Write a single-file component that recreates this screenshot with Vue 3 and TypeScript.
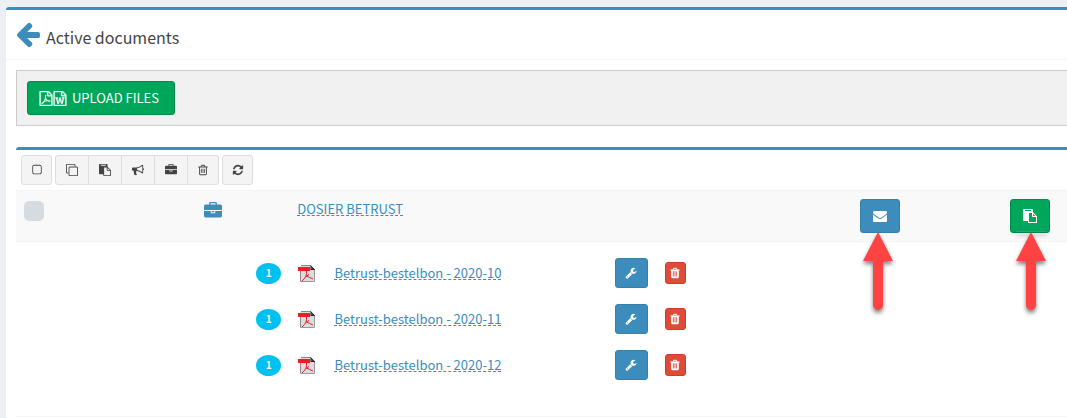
<script setup lang="ts">
interface Doc {
  id: number
  name: string
  pages: number
}

const docs: Doc[] = [
  { id: 1, name: 'Betrust-bestelbon - 2020-10', pages: 1 },
  { id: 2, name: 'Betrust-bestelbon - 2020-11', pages: 1 },
  { id: 3, name: 'Betrust-bestelbon - 2020-12', pages: 1 },
]

const sheet =
  'M1596 380q28 28 48 76t20 88v1152q0 40-28 68t-68 28h-1344q-40 0-68-28t-28-68v-1600q0-40 28-68t68-28h896q40 0 88 20t76 48zm-444-244v376h376q-10-29-22-41l-313-313q-12-12-41-22zm384 1528v-1024h-416q-40 0-68-28t-28-68v-416h-768v1536h1280z'
const trashLid =
  'M672 384h448l-48-117q-7-9-17-11h-317q-10 2-17 11zm928 32v64q0 14-9 23t-23 9h-96v948q0 83-47 143.5t-113 60.5h-832q-66 0-113-58.5t-47-141.5v-952h-96q-14 0-23-9t-9-23v-64q0-14 9-23t23-9h309l70-167q15-37 54-63t79-26h320q40 0 79 26t54 63l70 167h309q14 0 23 9t9 23z'

const icons = {
  back: 'M1664 896v128q0 53-32.5 90.5t-84.5 37.5h-704l293 294q38 36 38 90t-38 90l-75 76q-37 37-90 37-52 0-91-37l-651-652q-37-37-37-90 0-52 37-91l651-650q38-38 91-38 52 0 90 38l75 74q38 38 38 91t-38 91l-293 293h704q52 0 84.5 37.5t32.5 90.5z',
  pdf:
    sheet +
    'm-514-593q33 26 84 56 59-7 117-7 147 0 177 49 16 22 2 52 0 1-1 2l-2 2v1q-6 38-71 38-48 0-115-20t-130-53q-221 24-392 83-153 262-242 262-15 0-28-7l-24-12q-1-1-6-5-10-10-6-36 9-40 56-91.5t132-96.5q14-9 23 6 2 2 2 4 52-85 107-197 68-136 104-262-24-82-30.5-159.5t6.5-127.5q11-40 42-40h22q23 0 35 15 18 21 9 68-2 6-4 8 1 3 1 8v30q-2 123-14 192 55 164 146 238zm-576 411q52-24 137-158-51 40-87.5 84t-49.5 74zm398-920q-15 42-2 132 1-7 7-44 0-3 7-43 1-4 4-8-1-1-1-2-1-2-1-3-1-22-13-36 0 1-1 2v2zm-124 661q135-54 284-81-2-1-13-9.5t-16-13.5q-76-67-127-176-27 86-83 197-30 56-45 83zm646-16q-24-24-140-24 76 28 124 28 14 0 18-1 0-1-2-3z',
  word:
    sheet +
    'M361 768v107h70l164 661h159l128-485q7-20 10-46 2-16 2-24h4l3 24q1 3 3.5 20t5.5 26l128 485h159l164-661h70v-107h-300v107h90l-99 438q-5 20-7 46l-2 21h-4q0-3-.5-6.5t-1.5-8-1-6.5q-1-5-4-21t-5-25l-144-545h-114l-144 545q-2 9-4.5 24.5t-3.5 21.5l-4 21h-4l-2-21q-2-26-7-46l-99-438h90v-107z',
  square: 'M1312 256h-832q-66 0-113 47t-47 113v832q0 66 47 113t113 47h832q66 0 113-47t47-113v-832q0-66-47-113t-113-47zm288 160v832q0 119-84.5 203.5t-203.5 84.5h-832q-119 0-203.5-84.5t-84.5-203.5v-832q0-119 84.5-203.5t203.5-84.5h832q119 0 203.5 84.5t84.5 203.5z',
  clone: 'M1664 1632v-1088q0-13-9.5-22.5t-22.5-9.5h-1088q-13 0-22.5 9.5t-9.5 22.5v1088q0 13 9.5 22.5t22.5 9.5h1088q13 0 22.5-9.5t9.5-22.5zm128-1088v1088q0 66-47 113t-113 47h-1088q-66 0-113-47t-47-113v-1088q0-66 47-113t113-47h1088q66 0 113 47t47 113zm-384-384v160h-128v-160q0-13-9.5-22.5t-22.5-9.5h-1088q-13 0-22.5 9.5t-9.5 22.5v1088q0 13 9.5 22.5t22.5 9.5h160v128h-160q-66 0-113-47t-47-113v-1088q0-66 47-113t113-47h1088q66 0 113 47t47 113z',
  paste: 'M768 1664h896v-640h-416q-40 0-68-28t-28-68v-416h-384v1152zm256-1440v-64q0-13-9.5-22.5t-22.5-9.5h-704q-13 0-22.5 9.5t-9.5 22.5v64q0 13 9.5 22.5t22.5 9.5h704q13 0 22.5-9.5t9.5-22.5zm256 672h299l-299-299v299zm512 128v672q0 40-28 68t-68 28h-960q-40 0-68-28t-28-68v-160h-544q-40 0-68-28t-28-68v-1344q0-40 28-68t68-28h1088q40 0 68 28t28 68v328q21 13 36 28l408 408q28 28 48 76t20 88z',
  bullhorn: 'M1664 640q53 0 90.5 37.5t37.5 90.5-37.5 90.5-90.5 37.5v384q0 52-38 90t-90 38q-417-347-812-380-58 19-91 66t-31 100.5 40 92.5q-20 33-23 65.5t6 58 33.5 55 48 50 61.5 50.5q-29 58-111.5 83t-168.5 11.5-132-55.5q-7-23-29.5-87.5t-32-94.5-23-89-15-101 3.5-98.5 22-110.5h-122q-66 0-113-47t-47-113v-192q0-66 47-113t113-47h480q435 0 896-384 52 0 90 38t38 90v384zm-128 604v-954q-394 302-768 343v270q377 42 768 341z',
  briefcase: 'M640 256h512v-128h-512v128zm1152 640v480q0 66-47 113t-113 47h-1472q-66 0-113-47t-47-113v-480h672v160q0 26 19 45t45 19h320q26 0 45-19t19-45v-160h672zm-768 0v128h-256v-128h256zm768-480v384h-1792v-384q0-66 47-113t113-47h352v-160q0-40 28-68t68-28h576q40 0 68 28t28 68v160h352q66 0 113 47t47 113z',
  trashOutline:
    trashLid +
    'M704 736v576q0 14-9 23t-23 9h-64q-14 0-23-9t-9-23v-576q0-14 9-23t23-9h64q14 0 23 9t9 23zm256 0v576q0 14-9 23t-23 9h-64q-14 0-23-9t-9-23v-576q0-14 9-23t23-9h64q14 0 23 9t9 23zm256 0v576q0 14-9 23t-23 9h-64q-14 0-23-9t-9-23v-576q0-14 9-23t23-9h64q14 0 23 9t9 23zm128 724v-948h-896v948q0 22 7 40.5t14.5 27 10.5 8.5h832q3 0 10.5-8.5t14.5-27 7-40.5z',
  trash:
    trashLid +
    'M704 1376v-704q0-14-9-23t-23-9h-64q-14 0-23 9t-9 23v704q0 14 9 23t23 9h64q14 0 23-9t9-23zm256 0v-704q0-14-9-23t-23-9h-64q-14 0-23 9t-9 23v704q0 14 9 23t23 9h64q14 0 23-9t9-23zm256 0v-704q0-14-9-23t-23-9h-64q-14 0-23 9t-9 23v704q0 14 9 23t23 9h64q14 0 23-9t9-23z',
  refresh: 'M1639 1056q0 5-1 7-64 268-268 434.5t-478 166.5q-146 0-282.5-55t-243.5-157l-129 129q-19 19-45 19t-45-19-19-45v-448q0-26 19-45t45-19h448q26 0 45 19t19 45-19 45l-137 137q71 66 161 102t187 36q134 0 250-65t186-179q11-17 53-117 8-23 30-23h192q13 0 22.5 9.5t9.5 22.5zm25-800v448q0 26-19 45t-45 19h-448q-26 0-45-19t-19-45 19-45l138-138q-148-137-349-137-134 0-250 65t-186 179q-11 17-53 117-8 23-30 23h-199q-13 0-22.5-9.5t-9.5-22.5v-7q65-268 270-434.5t480-166.5q146 0 284 55.5t245 156.5l130-129q19-19 45-19t45 19 19 45z',
  envelope: 'M1792 710v794q0 66-47 113t-113 47h-1472q-66 0-113-47t-47-113v-794q44 49 101 87 362 246 497 345 57 42 92.5 65.5t94.5 48 110 24.5h2q51 0 110-24.5t94.5-48 92.5-65.5q170-123 498-345 57-39 100-87zm0-294q0 79-49 151t-122 123q-376 261-468 325-10 7-42.5 31t-54 38.5-52 32.5-57.5 27-50 9h-2q-23 0-50-9t-57.5-27-52-32.5-54-38.5-42.5-31q-91-64-262-182.5t-205-142.5q-62-42-117-115.5t-55-136.5q0-78 41.5-130t118.5-52h1472q65 0 112.5 47t47.5 113z',
  wrench: 'M448 1472q0-26-19-45t-45-19-45 19-19 45 19 45 45 19 45-19 19-45zm644-420l-682 682q-37 37-90 37-52 0-91-37l-106-108q-38-36-38-90 0-53 38-91l681-681q39 98 114.5 173.5t173.5 114.5zm634-435q0 39-23 106-47 134-164.5 217.5t-258.5 83.5q-185 0-316.5-131.5t-131.5-316.5 131.5-316.5 316.5-131.5q58 0 121.5 16.5t107.5 46.5q16 11 16 28t-16 28l-293 169v224l193 107q5-3 79-48.5t135.5-81 70.5-35.5q15 0 23.5 10t8.5 25z',
}

interface Tool {
  label: string
  icon: string
}

const toolGroups: Tool[][] = [
  [{ label: 'Select all', icon: icons.square }],
  [
    { label: 'Copy', icon: icons.clone },
    { label: 'Paste', icon: icons.paste },
    { label: 'Announce', icon: icons.bullhorn },
    { label: 'Dossier', icon: icons.briefcase },
    { label: 'Delete', icon: icons.trashOutline },
  ],
  [{ label: 'Refresh', icon: icons.refresh }],
]
</script>

<template>
  <div class="page">
    <main class="box">
      <header class="box-header">
        <a href="#" class="back" aria-label="Back">
          <svg viewBox="0 0 1792 1792"><path :d="icons.back" /></svg>
        </a>
        <h1>Active documents</h1>
      </header>

      <div class="box-body">
        <section class="upload">
          <button type="button" class="btn green upload-btn">
            <span class="file-icons">
              <svg viewBox="64 0 1664 1792"><path :d="icons.pdf" /></svg>
              <svg viewBox="64 0 1664 1792"><path fill-rule="evenodd" :d="icons.word" /></svg>
            </span>
            UPLOAD FILES
          </button>
        </section>

        <section class="list">
          <div class="toolbar">
            <div v-for="(group, g) in toolGroups" :key="g" class="group">
              <button v-for="tool in group" :key="tool.label" type="button" class="tool" :aria-label="tool.label">
                <svg viewBox="0 0 1792 1792"><path fill-rule="evenodd" :d="tool.icon" /></svg>
              </button>
            </div>
          </div>

          <table class="dossiers">
            <colgroup>
              <col class="c-check" />
              <col class="c-type" />
              <col class="c-name" />
              <col class="c-mail" />
              <col class="c-paste" />
            </colgroup>
            <tbody>
              <tr class="dossier">
                <td><input type="checkbox" class="check" aria-label="Select DOSIER BETRUST" /></td>
                <td><svg class="case" viewBox="0 0 1792 1792"><path :d="icons.briefcase" /></svg></td>
                <td><a href="#" class="edit">DOSIER BETRUST</a></td>
                <td>
                  <div class="pointed">
                    <button type="button" class="btn blue action" aria-label="Send by mail">
                      <svg viewBox="0 0 1792 1792"><path :d="icons.envelope" /></svg>
                    </button>
                    <svg class="pointer" viewBox="0 0 40 90">
                      <path d="M20 2L35 31H25V75A5 5 0 0 1 15 75V31H5Z" />
                    </svg>
                  </div>
                </td>
                <td>
                  <div class="pointed">
                    <button type="button" class="btn green action" aria-label="Paste documents">
                      <svg viewBox="0 0 1792 1792"><path fill-rule="evenodd" :d="icons.paste" /></svg>
                    </button>
                    <svg class="pointer right" viewBox="0 0 40 90">
                      <rect x="5" y="1" width="31" height="1" fill="#3c8dbc" />
                      <path d="M20 2L35 31H25V75A5 5 0 0 1 15 75V31H5Z" />
                    </svg>
                  </div>
                </td>
              </tr>
              <tr>
                <td colspan="5">
                  <table class="docs">
                    <colgroup>
                      <col class="d-count" />
                      <col class="d-type" />
                      <col class="d-name" />
                      <col class="d-tool" />
                      <col />
                    </colgroup>
                    <tbody>
                      <tr v-for="doc in docs" :key="doc.id">
                        <td class="count"><span class="badge">{{ doc.pages }}</span></td>
                        <td>
                          <svg class="pdf" viewBox="0 0 17 17">
                            <path d="M2 1H13L16 4V17H2Z" fill="#dcdcdc" />
                            <path d="M2.500 6V16.500M3 .5H13" fill="none" stroke="#888" />
                            <path d="M16.500 4V16.500H3" fill="none" stroke="#999" />
                            <path d="M12.500 0L17 4.500V5H12.500Z" fill="#222" />
                            <path d="M13 2L15 4H13Z" fill="#e3222b" />
                            <rect y="2" width="12" height="4" fill="#ee1c25" />
                            <path d="M8.500 6Q8.800 9 8 11Q6.500 14 4 16M8 11Q11 12 15 14M8.500 11L11 9.500" fill="none" stroke="#e3222b" />
                          </svg>
                        </td>
                        <td><a href="#" class="edit">{{ doc.name }}</a></td>
                        <td>
                          <button type="button" class="btn blue small" :aria-label="'Edit ' + doc.name">
                            <svg viewBox="0 0 1792 1792"><path :d="icons.wrench" /></svg>
                          </button>
                        </td>
                        <td>
                          <button type="button" class="btn red tiny" :aria-label="'Delete ' + doc.name">
                            <svg viewBox="0 0 1792 1792"><path fill-rule="evenodd" :d="icons.trash" /></svg>
                          </button>
                        </td>
                      </tr>
                    </tbody>
                  </table>
                </td>
              </tr>
            </tbody>
          </table>
          <footer class="list-footer"></footer>
        </section>
      </div>
    </main>
  </div>
</template>

<style>
body {
  margin: 0;
  background: #ecf0f5;
}
</style>

<style scoped>
* {
  box-sizing: border-box;
}
.page {
  display: flex;
  min-height: 100vh;
  padding: 7px 0 0 6px;
  overflow: hidden;
  background: #ecf0f5;
  color: #444;
  font-family: 'Source Sans Pro', 'Noto Sans CJK SC', 'Noto Sans', sans-serif;
  font-size: 13px;
  line-height: 20px;
}
svg {
  display: block;
  fill: currentColor;
}
.box {
  flex: 1;
  border-top: 3px solid #3c8dbc;
  border-top-left-radius: 3px;
  background: #fff;
  box-shadow: 0 1px 1px rgba(0, 0, 0, 0.1);
}
.box-header {
  display: flex;
  align-items: center;
  gap: 4px;
  height: 50px;
  padding: 0 8px 2px;
  border-bottom: 1px solid #f4f4f4;
}
.back {
  color: #3c8dbc;
}
.back svg {
  width: 28px;
  height: 28px;
}
h1 {
  margin: 6px 0 0;
  font-size: 16px;
  font-weight: 400;
  line-height: 20px;
}
.box-body {
  padding: 10px 0 0 10px;
}
.upload {
  padding: 10px;
  border: 1px solid #ccc;
  border-right: 0;
  background: #f1f1f1;
}
.btn {
  display: flex;
  align-items: center;
  justify-content: center;
  padding: 0;
  border: 1px solid;
  border-radius: 3px;
  color: #fff;
  font: inherit;
  cursor: pointer;
}
.green {
  border-color: #008d4c;
  background: #00a65a;
}
.blue {
  border-color: #367fa9;
  background: #3c8dbc;
}
.red {
  border-color: #d73925;
  background: #dd4b39;
}
.upload-btn {
  gap: 5px;
  height: 34px;
  padding: 0 15px 0 11px;
}
.file-icons {
  display: flex;
}
.file-icons svg {
  width: 14px;
  height: 15px;
  stroke: currentColor;
  stroke-width: 40;
}
.list {
  margin-top: 21px;
  border-top: 3px solid #3c8dbc;
  border-top-left-radius: 3px;
}
.toolbar {
  display: flex;
  gap: 3px;
  padding: 5px;
}
.group {
  display: flex;
}
.tool {
  display: flex;
  align-items: center;
  justify-content: center;
  width: 33px;
  height: 30px;
  padding: 0;
  border: 1px solid #ddd;
  background: #f4f4f4;
  color: #444;
  cursor: pointer;
}
.tool + .tool {
  border-left: 0;
}
.tool:first-child {
  width: 34px;
  border-radius: 3px 0 0 3px;
}
.tool:last-child {
  width: 31px;
  border-radius: 0 3px 3px 0;
}
.tool:only-child {
  border-radius: 3px;
}
.tool svg {
  width: 12px;
  height: 12px;
}
table {
  width: 100%;
  border-collapse: collapse;
  table-layout: fixed;
}
td {
  padding: 0;
  text-align: left;
}
.dossiers {
  margin-bottom: 20px;
}
.dossiers > tbody > tr > td {
  padding: 8px;
  border-top: 1px solid #f4f4f4;
  vertical-align: top;
}
.dossier {
  background: #f9f9f9;
}
.c-check {
  width: 17.1%;
}
.c-type {
  width: 8.9%;
}
.c-name {
  width: 53.5%;
}
.c-mail {
  width: 14.3%;
}
.check {
  display: block;
  width: 20px;
  height: 20px;
  margin: 2px 0 0;
  border-radius: 5px;
  appearance: none;
  background: #d5dbde;
}
.case {
  width: 18px;
  height: 18px;
  margin-top: 3px;
  color: #3c8dbc;
}
.edit {
  display: inline-block;
  border-bottom: 1px dashed #3c8dbc;
  color: #3c8dbc;
  line-height: 12px;
  text-decoration: none;
}
.pointed {
  position: relative;
  width: 40px;
}
.action {
  width: 40px;
  height: 34px;
}
.action svg {
  width: 14px;
  height: 14px;
}
.pointer {
  position: absolute;
  top: 31px;
  left: -2px;
  width: 40px;
  height: 90px;
  overflow: visible;
  fill: #ff4343;
  filter: drop-shadow(0 3px 2px rgba(0, 0, 0, 0.5));
  pointer-events: none;
}
.right {
  left: 1px;
}
.docs td {
  height: 46px;
  vertical-align: middle;
}
.d-count {
  width: 26.5%;
}
.d-type {
  width: 3.5%;
}
.d-name {
  width: 27.1%;
}
.d-tool {
  width: 4.8%;
}
.badge {
  display: block;
  width: 25px;
  height: 21px;
  margin-left: auto;
  border-radius: 50%;
  background: #00c0ef;
  color: #fff;
  font-size: 10px;
  font-weight: 700;
  line-height: 20px;
  text-align: center;
}
.docs .count {
  padding-right: 17px;
}
.pdf {
  width: 17px;
  height: 17px;
}
.small {
  width: 33px;
  height: 30px;
}
.small svg,
.tiny svg {
  width: 12px;
  height: 12px;
}
.tiny {
  width: 21px;
  height: 22px;
}
.list-footer {
  border-top: 1px solid #f4f4f4;
}
</style>
